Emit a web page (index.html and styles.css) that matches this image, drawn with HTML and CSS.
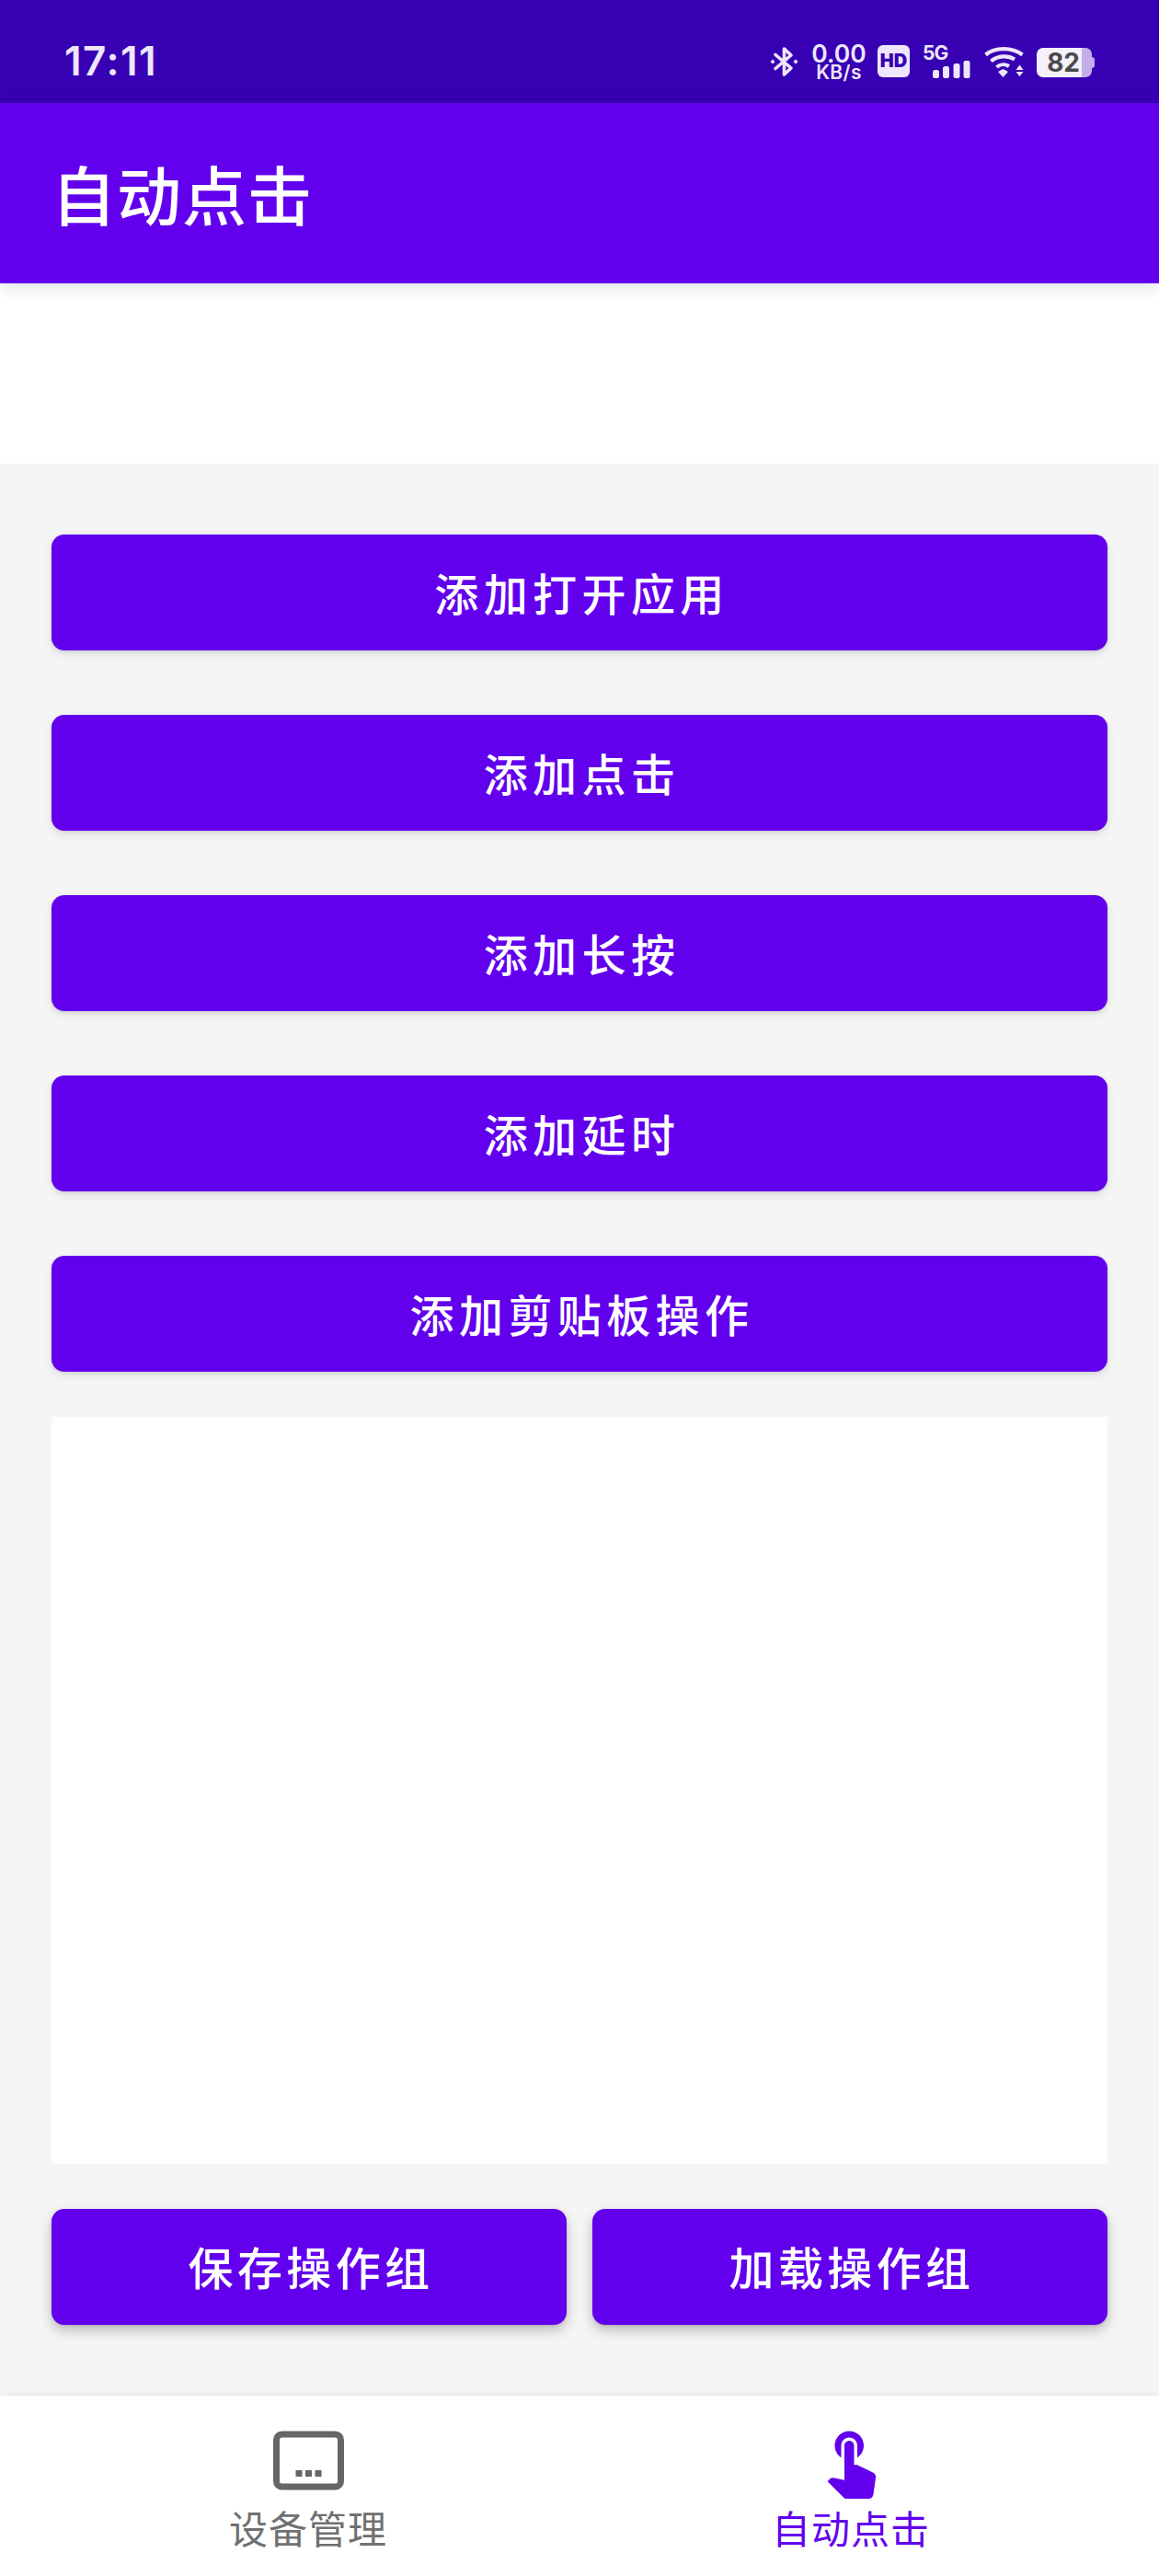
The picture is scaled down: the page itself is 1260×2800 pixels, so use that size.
FILE: index.html
```html
<!DOCTYPE html>
<html lang="zh-CN">
<head>
<meta charset="utf-8">
<title>自动点击</title>
<link rel="stylesheet" href="styles.css">
</head>
<body>
<div class="screen">
  <header class="status">
    <span class="time">17:11</span>
    <div class="status-icons">
      <svg class="ic-bt" viewBox="0 0 31 34" width="31" height="34"><path d="M6 9.500 L23 24 L15.500 31 V3 L23 10 L6 24.500" fill="none" stroke="#eee6fb" stroke-width="3.600" stroke-linejoin="round" stroke-linecap="round"/><path d="M3 14.500 L5.500 17 L3 19.500 L0.500 17Z M28 14.500 L30.500 17 L28 19.500 L25.500 17Z" fill="#eee6fb"/></svg>
      <div class="speed"><span class="speed-num">0.00</span><span class="speed-unit">KB/s</span></div>
      <span class="hd">HD</span>
      <div class="signal">
        <span class="five-g">5G</span>
        <svg class="bars" viewBox="0 0 41 19" width="41" height="19"><rect x="0" y="10" width="7" height="9" rx="2.500"/><rect x="11" y="6" width="7" height="13" rx="2.500"/><rect x="22.500" y="3" width="7" height="16" rx="2.500"/><rect x="33.500" y="0" width="7" height="19" rx="2"/></svg>
      </div>
      <svg class="wifi" viewBox="0 0 43 34" width="43" height="34"><g fill="none" stroke="#eee6fb" stroke-width="4.200"><path d="M1.500 9.500 C12 1 30 1 41.500 9.500"/><path d="M7.500 16.500 C15 10 26 10 33 14.500"/><path d="M13.500 23 C17.500 19.500 23 19.500 27 22"/></g><path d="M15 28 L20.500 25 L26 28 L20.500 34Z M38.500 20.500 L42.500 26 H34.500Z M34.500 28 H42.500 L38.500 33Z" fill="#eee6fb"/></svg>
      <div class="battery"><span class="batt-num">82</span><span class="batt-rest"></span></div>
    </div>
  </header>

  <div class="appbar"><h1 class="title">自动点击</h1></div>
  <div class="blank"></div>

  <main class="content">
    <div class="actions">
      <button class="btn">添加打开应用</button>
      <button class="btn">添加点击</button>
      <button class="btn">添加长按</button>
      <button class="btn">添加延时</button>
      <button class="btn">添加剪贴板操作</button>
    </div>
    <div class="panel"></div>
    <div class="group-row">
      <button class="btn btn-large">保存操作组</button>
      <button class="btn btn-large">加载操作组</button>
    </div>
  </main>

  <nav class="nav">
    <div class="tab">
      <svg class="tab-icon" viewBox="0 0 84 84" width="84" height="84"><rect x="7.500" y="14" width="70" height="57" rx="6" fill="none" stroke="#666" stroke-width="7"/><rect x="28.500" y="53" width="7" height="7" fill="#666"/><rect x="39" y="53" width="7" height="7" fill="#666"/><rect x="49.500" y="53" width="7" height="7" fill="#666"/></svg>
      <span class="tab-label">设备管理</span>
    </div>
    <div class="tab tab-active">
      <svg class="tab-icon" viewBox="0 0 24 24" width="84" height="84"><path fill="#6200ee" d="M9 11.240V7.500C9 6.120 10.120 5 11.500 5S14 6.120 14 7.500v3.740c1.210-.81 2-2.180 2-3.740C16 5.010 13.990 3 11.500 3S7 5.010 7 7.500c0 1.560.79 2.930 2 3.740zm9.840 4.630l-4.540-2.260c-.17-.07-.35-.11-.54-.11H13v-6c0-.83-.67-1.500-1.500-1.500S10 6.670 10 7.500v10.740l-3.430-.72c-.08-.01-.15-.03-.24-.03-.31 0-.59.13-.79.33l-.79.800 4.940 4.940c.27.27.65.44 1.060.44h6.790c.75 0 1.330-.55 1.440-1.280l.75-5.270c.01-.07.02-.14.02-.2 0-.62-.38-1.160-.91-1.380z"/></svg>
      <span class="tab-label">自动点击</span>
    </div>
  </nav>
</div>
</body>
</html>
```

FILE: styles.css
```css
* { box-sizing: border-box; }
html, body { margin: 0; padding: 0; }
body {
  background: #fff;
  font-family: "Noto Sans CJK SC", "Noto Sans", sans-serif;
}
.screen {
  width: 1260px;
  height: 2800px;
  display: flex;
  flex-direction: column;
  overflow: hidden;
}

/* status bar */
.status {
  height: 112px;
  flex: none;
  background: #3700b3;
  color: #eee6fb;
  display: flex;
  align-items: flex-start;
  justify-content: space-between;
  padding: 0 70px;
  font-family: Inter, sans-serif;
}
.time {
  font-size: 44px;
  font-weight: 600;
  line-height: 50px;
  margin-top: 41px;
  letter-spacing: 1.500px;
}
.status-icons {
  display: flex;
  align-items: flex-start;
  margin-top: 48px;
}
.ic-bt { margin-top: 2px; flex: none; }
.speed {
  display: flex;
  flex-direction: column;
  align-items: center;
  width: 58px;
  margin-left: 15px;
  font-weight: 600;
}
.speed-num { font-size: 26.500px; line-height: 21px; }
.speed-unit { font-size: 21px; line-height: 18px; margin-top: 1px; letter-spacing: 0.400px; }
.hd {
  width: 35px;
  height: 35px;
  margin-left: 13px;
  margin-top: 1px;
  border-radius: 6px;
  background: #eee6fb;
  color: #3700b3;
  font-size: 20px;
  font-weight: 900;
  line-height: 35px;
  text-align: center;
}
.signal {
  width: 52px;
  margin-left: 14px;
  margin-top: 1px;
  display: flex;
  flex-direction: column;
}
.five-g { font-size: 21px; font-weight: 700; line-height: 17px; letter-spacing: -1px; }
.bars { fill: #eee6fb; margin-left: 11px; display: block; }
.wifi { margin-left: 15px; margin-top: 2px; flex: none; }
.battery {
  width: 63px;
  height: 32px;
  margin-left: 14px;
  margin-top: 4px;
  display: flex;
  position: relative;
}
.batt-num {
  width: 49px;
  height: 32px;
  background: #f4f0fc;
  border-radius: 7px 0 0 7px;
  color: #4a4a4a;
  font-size: 28px;
  font-weight: 700;
  line-height: 32px;
  text-align: right;
  padding-right: 2px;
}
.batt-rest {
  width: 11px;
  height: 32px;
  background: #c3aee9;
  border-radius: 0 7px 7px 0;
}
.battery::after {
  content: "";
  position: absolute;
  right: 0;
  top: 10px;
  width: 3px;
  height: 12px;
  background: #c3aee9;
  border-radius: 0 3px 3px 0;
}

/* app bar */
.appbar {
  height: 196px;
  flex: none;
  background: #6200ee;
  display: flex;
  align-items: center;
  padding-left: 56px;
  position: relative;
  box-shadow: 0 6px 18px rgba(0, 0, 0, 0.1);
}
.title {
  margin: 0;
  color: #fff;
  font-size: 70px;
  font-weight: 500;
  line-height: 1;
  letter-spacing: 1px;
}
.blank { height: 196px; flex: none; background: #fff; }

/* content */
.content {
  flex: 1;
  background: #f5f5f5;
  padding: 77px 56px 0;
  display: flex;
  flex-direction: column;
}
.actions { display: flex; flex-direction: column; gap: 70px; }
.btn {
  height: 126px;
  width: 100%;
  border: 0;
  border-radius: 14px;
  padding: 0 0 3px 5px;
  background: #6200ee;
  color: #fff;
  font-family: inherit;
  font-size: 48px;
  font-weight: 500;
  letter-spacing: 5.400px;
  box-shadow: 0 4px 10px rgba(0, 0, 0, 0.1), 0 1px 3px rgba(0, 0, 0, 0.1);
}
.panel { height: 812px; margin-top: 49px; background: #fff; flex: none; }
.group-row { display: flex; gap: 28px; margin-top: 49px; }
.btn-large {
  flex: 1;
  width: auto;
  padding-left: 4px;
  font-size: 49px;
  letter-spacing: 4.400px;
  box-shadow: 0 6px 14px rgba(0, 0, 0, 0.24), 0 1px 3px rgba(0, 0, 0, 0.12);
}

/* bottom navigation */
.nav {
  height: 196px;
  flex: none;
  background: #fff;
  display: flex;
  padding: 0 40px;
  position: relative;
  box-shadow: 0 -1px 6px rgba(0, 0, 0, 0.07);
}
.tab {
  flex: 1;
  display: flex;
  flex-direction: column;
  align-items: center;
  padding-top: 28px;
  color: #707070;
}
.tab-icon { display: block; flex: none; }
.tab-label { font-size: 42px; line-height: 48px; margin-top: 7px; letter-spacing: 1px; }
.tab-active { color: #6200ee; }
```
